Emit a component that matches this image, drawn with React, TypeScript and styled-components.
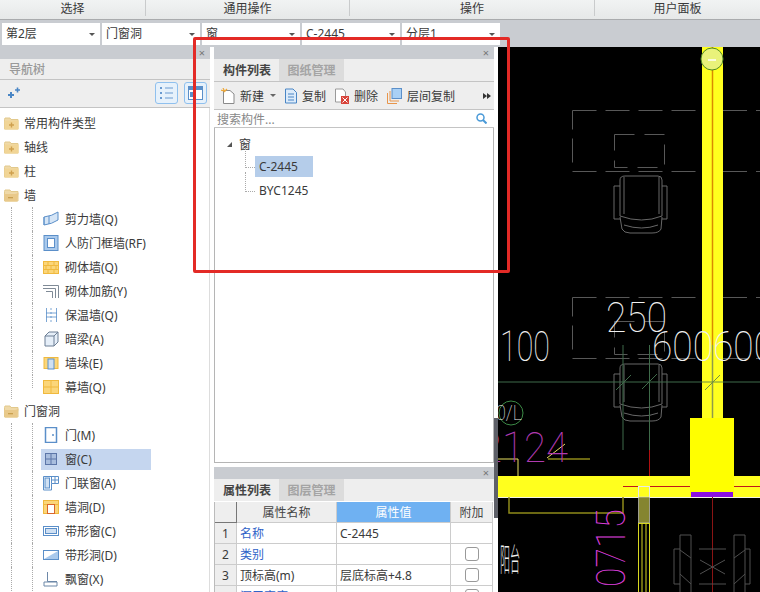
import React from 'react'
import styled, { createGlobalStyle } from 'styled-components'

const Global = createGlobalStyle`
  html, body { margin: 0; padding: 0; background: #fff; overflow: hidden; }
  * { box-sizing: border-box; }
`

const FONT = `"Noto Sans", "Noto Sans CJK SC", sans-serif`

const Page = styled.div`
  position: relative;
  width: 760px;
  height: 592px;
  overflow: hidden;
  display: flex;
  flex-direction: column;
  font-family: ${FONT};
  font-size: 12px;
  color: #3a3a3a;
`

const MenuBar = styled.div`
  flex: none;
  height: 20px;
  display: flex;
  background: linear-gradient(#f1f3f3, #e6e8e8);
  border-bottom: 1px solid #a9abad;
`

const MenuGroup = styled.div<{ $w: number }>`
  width: ${(p) => p.$w}px;
  line-height: 17px;
  text-align: center;
  border-right: 1px solid #c9cbcc;
  height: 16px;
  &:last-child { border-right: 0; }
`

const ComboBar = styled.div`
  flex: none;
  height: 27px;
  padding: 3px 0 0 2px;
  display: flex;
  gap: 2px;
  background: #c9ccd1;
`

const Combo = styled.div`
  width: 98px;
  height: 22px;
  background: #fff;
  padding-left: 4px;
  line-height: 21px;
  position: relative;
  &::after {
    content: '';
    position: absolute;
    right: 5px;
    top: 10px;
    border: 3px solid transparent;
    border-top: 3px solid #555;
  }
`

const Main = styled.div`
  flex: 1;
  display: flex;
  min-height: 0;
`

const Panel = styled.div<{ $w: number }>`
  width: ${(p) => p.$w}px;
  flex: none;
  display: flex;
  flex-direction: column;
`

const Gutter = styled.div<{ $w: number }>`
  width: ${(p) => p.$w}px;
  flex: none;
  background: #fff;
`

const Splitter = styled.div`
  width: 4px;
  flex: none;
  padding-top: 371px;
  background: #fff;
`

const SplitterGrip = styled.div`
  height: 100px;
  background: #5e6068;
`

const Stack = styled.div`
  width: 280px;
  flex: none;
  display: flex;
  flex-direction: column;
`

const TitleStrip = styled.div`
  flex: none;
  height: 12px;
  background: #c9ccd1;
  color: #777;
  text-align: right;
  font-size: 11px;
  line-height: 12px;
  padding-right: 5px;
`

const NavHead = styled.div`
  flex: none;
  height: 21px;
  background: #eeeeee;
  border-bottom: 1px solid #c4c4c4;
  color: #999;
  line-height: 22px;
  padding-left: 9px;
  font-weight: 500;
`

const NavTools = styled.div`
  flex: none;
  height: 28px;
  background: #eeeeee;
  border-bottom: 1px solid #c4c4c4;
  display: flex;
  align-items: center;
  padding: 0 3px 1px 8px;
  gap: 6px;
`

const ToggleButton = styled.div`
  width: 23px;
  height: 22px;
  border: 1px solid #8fc0ee;
  border-radius: 3px;
  background: #e6f1fb;
  display: flex;
  align-items: center;
  justify-content: center;
`

const Spacer = styled.div`
  flex: 1;
`

const Tree = styled.div`
  flex: 1;
  background: #fff;
  padding-top: 3px;
  overflow: hidden;
  border-right: 1px solid #ddd;
`

const RootRow = styled.div`
  height: 24px;
  display: flex;
  align-items: center;
  padding-left: 4px;
  gap: 5px;
`

const ChildRow = styled.div<{ $last?: boolean; $on?: boolean }>`
  height: 24px;
  display: flex;
  align-items: center;
  padding-left: 43px;
  gap: 5px;
  position: relative;
  &::before {
    content: '';
    position: absolute;
    left: 11px;
    top: 0;
    bottom: 0;
    border-left: 1px dotted #aaa;
  }
  &::after {
    content: '';
    position: absolute;
    left: 32px;
    top: 0;
    width: 9px;
    height: ${(p) => (p.$last ? 13 : 24)}px;
    border-left: 1px dotted #aaa;
    background: radial-gradient(circle, #aaa 0.5px, transparent 0.6px) 0 11px / 2px 2px repeat-x;
  }
`

const RowLabel = styled.span<{ $on?: boolean }>`
  display: flex;
  align-items: center;
  height: 21px;
  flex: none;
  gap: 6px;
  margin-left: -2px;
  padding-left: 2px;
  width: 110px;
  white-space: nowrap;
  background: ${(p) => (p.$on ? '#c5d6ef' : 'transparent')};
`

const TabRow = styled.div`
  flex: none;
  height: 22px;
  display: flex;
  background: #eeeeee;
  padding-left: 1px;
`

const Tab = styled.div<{ $active?: boolean }>`
  width: ${(p) => (p.$active ? 64 : 65)}px;
  text-align: center;
  line-height: 24px;
  font-weight: 700;
  color: ${(p) => (p.$active ? '#444' : '#a4a4a4')};
  background: ${(p) => (p.$active ? '#eeeeee' : '#dcdcdc')};
`

const ListTools = styled.div`
  flex: none;
  height: 29px;
  background: #eeeeee;
  border-top: 1px solid #c4c4c4;
  border-bottom: 1px solid #c4c4c4;
  display: flex;
  align-items: center;
  padding-left: 7px;
`

const ToolButton = styled.div<{ $w: number }>`
  width: ${(p) => p.$w}px;
  flex: none;
  display: flex;
  align-items: center;
  gap: 5px;
  white-space: nowrap;
`

const DropCaret = styled.span`
  border: 3px solid transparent;
  border-top: 3px solid #666;
  margin: 3px 0 0 1px;
`

const MoreArrows = styled.svg`
  margin-left: auto;
  margin-right: 3px;
`

const SearchBox = styled.div`
  flex: none;
  height: 18px;
  display: flex;
  align-items: center;
  justify-content: space-between;
  padding: 0 7px 0 3px;
  color: #888;
  background: #fff;
  border-bottom: 1px solid #c4c4c4;
`

const ListTree = styled.div`
  height: 335px;
  flex: none;
  background: #fff;
  border-left: 1px solid #b5b5b5;
  border-right: 1px solid #b5b5b5;
  border-bottom: 1px solid #b5b5b5;
  padding: 6px 0 0 10px;
`

const GroupRow = styled.div`
  height: 20px;
  display: flex;
  align-items: center;
  gap: 7px;
  padding-left: 2px;
`

const Triangle = styled.span`
  width: 0;
  height: 0;
  border-left: 5px solid transparent;
  border-bottom: 5px solid #555;
`

const LeafRow = styled.div`
  position: relative;
  height: 24px;
  display: flex;
  align-items: center;
  padding-left: 30px;
  &::before {
    content: '';
    position: absolute;
    left: 20px;
    top: -6px;
    height: 19px;
    width: 9px;
    border-left: 1px dotted #aaa;
    border-bottom: 1px dotted #aaa;
  }
`

const LeafName = styled.span<{ $on?: boolean }>`
  height: 21px;
  line-height: 21px;
  padding: 0 4px;
  width: 58px;
  white-space: nowrap;
  background: ${(p) => (p.$on ? '#b5cdea' : 'transparent')};
`

const Gap = styled.div`
  flex: none;
  height: 4px;
  background: #fff;
`

const Props = styled.div`
  flex: 1;
  display: flex;
  flex-direction: column;
  background: #fff;
  min-height: 0;
`

const Grid = styled.div`
  display: grid;
  grid-template-columns: 22px 100px 114px 42px;
  grid-auto-rows: 21px;
  border-left: 1px solid #bbb;
  margin-top: 1px;
  width: 279px;
`

const HeadCell = styled.div<{ $sel?: boolean; $corner?: boolean }>`
  text-align: center;
  line-height: 22px;
  background: ${(p) => (p.$sel ? '#6fb1f2' : '#eeeeee')};
  color: ${(p) => (p.$sel ? '#fff' : '#444')};
  border-right: 1px solid ${(p) => (p.$corner ? '#777' : '#ccc')};
  border-bottom: 1px solid ${(p) => (p.$corner ? '#777' : '#ccc')};
`

const NumCell = styled.div`
  text-align: center;
  line-height: 21px;
  background: #eeeeee;
  border-right: 1px solid #ccc;
  border-bottom: 1px solid #ccc;
`

const Cell = styled.div<{ $blue?: boolean }>`
  line-height: 21px;
  padding-left: 3px;
  color: ${(p) => (p.$blue ? '#2f62c8' : '#3a3a3a')};
  border-right: 1px solid #ccc;
  border-bottom: 1px solid #ccc;
  white-space: nowrap;
`

const CheckCell = styled.div`
  display: flex;
  align-items: center;
  justify-content: center;
  border-right: 1px solid #ccc;
  border-bottom: 1px solid #ccc;
`

const Check = styled.span`
  width: 14px;
  height: 14px;
  border: 1px solid #999;
  border-radius: 3px;
  background: #fff;
`

const Canvas = styled.svg`
  flex: 1;
  display: block;
  background: #000;
`

const RedFrame = styled.div`
  position: absolute;
  left: 193px;
  top: 37px;
  width: 317px;
  height: 236px;
  border: 3px solid #e32a26;
  border-radius: 2px;
  pointer-events: none;
`

const Folder = ({ open }: { open?: boolean }) => (
  <svg width="15" height="13" viewBox="0 0 15 13">
    <path d="M0.5 2.5 L1 1 H6 L7 2.5 H14 V12 H0.5Z" fill="#efd9a8" stroke="#e2c98c" />
    {open ? (
      <path d="M0 5 H11 L14.5 4 L13 12.5 H1Z" fill="#e9c98a" />
    ) : (
      <rect x="0.5" y="3.5" width="14" height="9" fill="#f1d596" />
    )}
    {open ? (
      <rect x="4" y="8" width="5" height="1.3" fill="#c9a050" />
    ) : (
      <path d="M5 8 H10 M7.5 5.5 V10.5" stroke="#cfa04e" strokeWidth="1.4" />
    )}
  </svg>
)

const BLUE = '#5b8fc9'
const GOLD = '#f0b93e'

const NodeIcon = ({ kind }: { kind: string }) => {
  let inner: React.ReactNode = null
  switch (kind) {
    case 'shear':
      inner = (
        <>
          <path d="M1 6 Q9 5 15 1 V9 Q9 13 1 14Z" fill="#d5e5f6" stroke={BLUE} />
          <path d="M1 6 V14 M6 5 V13" stroke={BLUE} />
        </>
      )
      break
    case 'frame':
      inner = (
        <>
          <rect x="1" y="0.5" width="14" height="15" fill="#a9c9ec" stroke={BLUE} />
          <rect x="4.5" y="3.5" width="7" height="9" fill="#fff" stroke={BLUE} />
        </>
      )
      break
    case 'brick':
      inner = (
        <>
          <rect x="0.5" y="2.5" width="15" height="12" fill="#fbd67a" stroke={GOLD} />
          <path d="M1 6.5 H15 M1 10.5 H15 M5 3 V6 M11 3 V6 M8 7 V10 M3 7 V10 M13 7 V10 M5 11 V14 M11 11 V14" stroke={GOLD} />
        </>
      )
      break
    case 'rebar':
      inner = <path d="M0 2.5 H15.5 V15 M0 5.5 H12.5 V15 M3 8.5 H9.5 V15" fill="none" stroke="#7f8a96" />
      break
    case 'insul':
      inner = <path d="M3.5 1 V15 M13.5 1 V15 M8 1 V3 M8 5 V7 M8 9 V11 M8 13 V15 M3 6 H14 M3 10 H14" fill="none" stroke={BLUE} strokeWidth="0.8" />
      break
    case 'beam':
      inner = (
        <>
          <path d="M2 5 L6 1 H15 V11 L11 15 H2Z" fill="#e6eff9" stroke="#6d7f95" />
          <path d="M2 5 H11 V15 M11 5 L15 1" fill="none" stroke="#6d7f95" />
        </>
      )
      break
    case 'pier':
      inner = (
        <>
          <rect x="1" y="2.5" width="14" height="11" fill="#fbd67a" stroke={GOLD} />
          <rect x="5" y="4" width="6" height="10" fill="#cfe0f3" stroke={BLUE} />
        </>
      )
      break
    case 'curtain':
      inner = (
        <>
          <rect x="0.5" y="1.5" width="15" height="13" fill="#fbd67a" stroke={GOLD} />
          <path d="M8 2 V14 M1 8 H15" stroke={GOLD} />
        </>
      )
      break
    case 'door':
      inner = (
        <>
          <rect x="2.5" y="0.5" width="11" height="15" fill="#fff" stroke={BLUE} strokeWidth="1.5" />
          <circle cx="10" cy="8" r="1" fill={BLUE} />
        </>
      )
      break
    case 'window':
      inner = (
        <>
          <rect x="2.5" y="2.5" width="11" height="11" fill="#a9bede" stroke="#5c76a8" />
          <path d="M8 3 V13 M3 8 H13" stroke="#5c76a8" />
        </>
      )
      break
    case 'doorwin':
      inner = (
        <>
          <path d="M0.5 1.5 H15.5 V8.5 H8.5 V15 H0.5Z" fill="#fff" stroke={BLUE} />
          <path d="M8.5 1.5 V8.5 M12 2 V8 M9 5 H15" stroke={BLUE} />
          <rect x="2" y="3" width="4.5" height="10" fill="#cfe0f3" stroke={BLUE} />
        </>
      )
      break
    case 'hole':
      inner = (
        <>
          <rect x="0.5" y="1.5" width="15" height="13" fill="#fbd67a" stroke={GOLD} />
          <path d="M1 5.5 H15" stroke={GOLD} />
          <rect x="4.5" y="5.5" width="7" height="9" fill="#fff" stroke="#d9652c" />
        </>
      )
      break
    case 'strip':
      inner = (
        <>
          <rect x="0.5" y="3.5" width="15" height="9" fill="#fff" stroke={BLUE} />
          <rect x="2.5" y="5.5" width="11" height="5" fill="#cfe0f3" stroke={BLUE} />
        </>
      )
      break
    case 'striphole':
      inner = (
        <>
          <rect x="0.5" y="3.5" width="15" height="9" fill="#fff" stroke={BLUE} />
          <path d="M1 12 L15 4 V12Z" fill="#a9c9ec" />
        </>
      )
      break
    default:
      inner = <path d="M4.5 1 V10.5 H14 M1 11 H14 V15 H1Z" fill="none" stroke="#6d88a8" />
  }
  return (
    <svg width="16" height="16" viewBox="0 0 16 16">
      {inner}
    </svg>
  )
}

const wallItems: [string, string][] = [
  ['shear', '剪力墙(Q)'],
  ['frame', '人防门框墙(RF)'],
  ['brick', '砌体墙(Q)'],
  ['rebar', '砌体加筋(Y)'],
  ['insul', '保温墙(Q)'],
  ['beam', '暗梁(A)'],
  ['pier', '墙垛(E)'],
  ['curtain', '幕墙(Q)'],
]

const openingItems: [string, string][] = [
  ['door', '门(M)'],
  ['window', '窗(C)'],
  ['doorwin', '门联窗(A)'],
  ['hole', '墙洞(D)'],
  ['strip', '带形窗(C)'],
  ['striphole', '带形洞(D)'],
  ['bay', '飘窗(X)'],
]

const Chair = ({ y }: { y: number }) => (
  <g transform={`translate(0 ${y})`} fill="none" stroke="#686868" strokeWidth="1">
    <path d="M620 180 Q620 176 625 176 H658 Q662 176 662 180 V216 Q642 224 620 216Z" />
    <path d="M624 177 V214 M659 177 V214" />
    <path d="M614 186 H620 M614 186 V219 H620 M662 186 H667 V219 H662" />
    <path d="M620 217 L622 229 Q624 233 630 233 H652 Q659 233 661 229 L662 217" />
    <path d="M624 225 Q642 231 658 225" />
  </g>
)

const DashedRoom = ({ y }: { y: number }) => (
  <g fill="none" stroke="#585858" strokeWidth="1" strokeDasharray="24 9">
    <rect x="572.5" y={y + 0.5} width="130" height="61" />
    <path d={`M723 ${y + 0.5} H760 M723 ${y + 61.5} H760`} />
    <rect x="614.5" y={y + 24.5} width="50" height="33" strokeDasharray="20 10" />
  </g>
)

const CadDrawing = () => (
  <Canvas viewBox="498 47 262 545" preserveAspectRatio="none">
    <DashedRoom y={110} />
    <DashedRoom y={297} />
    <Chair y={0} />
    <Chair y={188} />

    {/* grid lines */}
    <path d="M498 382 H702 M723 382 H760" stroke="#3f6b4a" />
    <path d="M623 345 V450 M649.5 345 V450" stroke="#3f6b4a" />
    <path d="M616 390 L631 375 M642 389 L657 374" stroke="#3f6b4a" />

    {/* vertical wall */}
    <rect x="702" y="47" width="21" height="372" fill="#ffff1e" />
    <path d="M712.5 47 V345" stroke="#d98a00" strokeWidth="1.5" />
    <path d="M712.5 345 V418" stroke="#8e9a4a" strokeWidth="1.5" />
    <path d="M705 390 L720 375 M702 382 H723" stroke="#6f9040" />
    <circle cx="712" cy="59" r="11" fill="#e9f27a" stroke="#4f8a22" />
    <path d="M708 60 H716" stroke="#fff" strokeWidth="1.5" />

    {/* horizontal wall */}
    <rect x="498" y="476" width="262" height="21" fill="#ffff1e" />
    <path d="M498 497.5 H760" stroke="#f4f4e0" />
    <rect x="690" y="418" width="44" height="79" fill="#ffff00" />
    <rect x="691" y="492" width="42" height="5" fill="#8a10e0" />
    <path d="M623 486.5 H690 M734 486.5 H760" stroke="#c01818" />
    <path d="M649.5 450 V476" stroke="#b01010" />
    <path d="M712.5 497 V592" stroke="#8a1414" />

    {/* annotation leaders */}
    <path d="M498 459 H518 V476" fill="none" stroke="#e8e060" />
    <path d="M548 459 H590" stroke="#8f8a1a" strokeWidth="1.5" />
    <path d="M547 458 L565 444" stroke="#e8e060" />
    <path d="M509 497 V513 H623 V497" fill="none" stroke="#8f8a1a" strokeWidth="1.5" />

    {/* stub below the wall */}
    <rect x="638.5" y="486.5" width="11" height="11" fill="#ffff1e" stroke="#e8e8e8" />
    <rect x="638.5" y="497" width="11" height="26" fill="#858530" stroke="#ddd" strokeWidth="0.6" />
    <rect x="638" y="524" width="12" height="68" fill="#000" />
    <path d="M638.5 524 V592 M642 524 V592 M646 524 V592 M649.5 524 V592" stroke="#d8d820" />
    <path d="M638 523.5 H650" stroke="#d8d820" />

    {/* bottom right fixture */}
    <g fill="none" stroke="#505050">
      <path d="M680 592 V535 H691 V592 M734 592 V535 H745 V592" />
      <path d="M674 549 H680 M674 549 V584 H680 M745 549 H750 V584 H745" />
      <path d="M680 550 L691 558 M745 550 L734 558 M680 574 L691 584 M745 574 L734 584" />
      <path d="M699 549 H726 M699 584 H726 M700 560 L725 574 M725 560 L700 574" />
    </g>

    <circle cx="511" cy="413" r="12" fill="none" stroke="#3c8a46" />

    <g fontFamily="Roboto, Lato, sans-serif" fontWeight="100" fill="#f0f0f0">
      <text x="606" y="332" fontSize="42" textLength="61" lengthAdjust="spacingAndGlyphs">250</text>
      <text x="500" y="361" fontSize="42" textLength="50" lengthAdjust="spacingAndGlyphs">100</text>
      <text x="652" y="361" fontSize="42" textLength="122" lengthAdjust="spacingAndGlyphs">600600</text>
      <text x="496" y="420" fontSize="20" textLength="26" lengthAdjust="spacingAndGlyphs">0/L</text>
    </g>
    <text x="480" y="462" fontFamily="Roboto, Lato, sans-serif" fontWeight="100" fontSize="42" fill="#b03ab0" textLength="88" lengthAdjust="spacingAndGlyphs">2124</text>
    <text transform="translate(625 587) rotate(-90)" fontFamily="Roboto, Lato, sans-serif" fontWeight="100" fontSize="40" fill="#e040e0" textLength="78" lengthAdjust="spacingAndGlyphs">0715</text>
    <text transform="translate(500 571) scale(0.5 1.6)" fontFamily="Noto Sans CJK SC, sans-serif" fontWeight="300" fontSize="20" fill="#eee">阳台</text>
  </Canvas>
)

const App = () => {
  return (
    <Page>
      <Global />
      <MenuBar>
        <MenuGroup $w={146}>选择</MenuGroup>
        <MenuGroup $w={204}>通用操作</MenuGroup>
        <MenuGroup $w={245}>操作</MenuGroup>
        <MenuGroup $w={165}>用户面板</MenuGroup>
      </MenuBar>
      <ComboBar>
        <Combo>第2层</Combo>
        <Combo>门窗洞</Combo>
        <Combo>窗</Combo>
        <Combo>C-2445</Combo>
        <Combo>分层1</Combo>
      </ComboBar>
      <Main>
        <Panel $w={210}>
          <TitleStrip>×</TitleStrip>
          <NavHead>导航树</NavHead>
          <NavTools>
            <svg width="12" height="12" viewBox="0 0 12 12">
              <path d="M0 8 H6 M3 5 V11" stroke="#4a86c5" strokeWidth="2" />
              <path d="M7 3 H12 M9.5 0.5 V5.5" stroke="#4a86c5" strokeWidth="1.6" />
            </svg>
            <Spacer />
            <ToggleButton>
              <svg width="15" height="14" viewBox="0 0 15 14">
                <path d="M1 2 H3 M1 7 H3 M1 12 H3" stroke="#6a9ad0" strokeWidth="2" />
                <path d="M6 2 H14 M6 7 H14 M6 12 H14" stroke="#6a9ad0" />
              </svg>
            </ToggleButton>
            <ToggleButton>
              <svg width="15" height="14" viewBox="0 0 15 14">
                <rect x="0.5" y="0.5" width="14" height="13" fill="#fff" stroke="#5b8fc9" />
                <rect x="1" y="1" width="13" height="3" fill="#5b8fc9" />
                <rect x="2" y="6" width="4" height="5" fill="#5b8fc9" />
              </svg>
            </ToggleButton>
          </NavTools>
          <Tree>
            <RootRow>
              <Folder />
              常用构件类型
            </RootRow>
            <RootRow>
              <Folder />
              轴线
            </RootRow>
            <RootRow>
              <Folder />柱
            </RootRow>
            <RootRow>
              <Folder open />墙
            </RootRow>
            {wallItems.map(([kind, label], i) => (
              <ChildRow key={label} $last={i === wallItems.length - 1}>
                <RowLabel>
                  <NodeIcon kind={kind} />
                  {label}
                </RowLabel>
              </ChildRow>
            ))}
            <RootRow>
              <Folder open />
              门窗洞
            </RootRow>
            {openingItems.map(([kind, label]) => (
              <ChildRow key={label}>
                <RowLabel $on={kind === 'window'}>
                  <NodeIcon kind={kind} />
                  {label}
                </RowLabel>
              </ChildRow>
            ))}
          </Tree>
        </Panel>
        <Gutter $w={4} />
        <Stack>
          <TitleStrip>×</TitleStrip>
          <TabRow>
            <Tab $active>构件列表</Tab>
            <Tab>图纸管理</Tab>
          </TabRow>
          <ListTools>
            <ToolButton $w={64}>
              <svg width="14" height="16" viewBox="0 0 14 16">
                <path d="M2.5 2.5 H9 L13 6 V15.5 H2.5Z" fill="#fff" stroke="#8a8a8a" />
                <path d="M0 2 L3 3 M2 0 L4 4 M6 1 L3 4" stroke="#eda83a" strokeWidth="1.2" />
              </svg>
              新建
              <DropCaret />
            </ToolButton>
            <ToolButton $w={50}>
              <svg width="12" height="16" viewBox="0 0 12 16">
                <path d="M0.5 1 H8 L11.5 4.5 V15 H0.5Z" fill="#dcebfa" stroke="#4a86c5" />
                <path d="M3 6 H9 M3 9 H9 M3 12 H9" stroke="#4a86c5" />
              </svg>
              复制
            </ToolButton>
            <ToolButton $w={52}>
              <svg width="14" height="16" viewBox="0 0 14 16">
                <path d="M0.5 1 H8 L10.5 4 V14 H0.5Z" fill="#fff" stroke="#9a9a9a" />
                <rect x="6" y="8" width="8" height="8" fill="#d8433a" />
                <path d="M7.5 9.5 L12.5 14.5 M12.5 9.5 L7.5 14.5" stroke="#fff" />
              </svg>
              删除
            </ToolButton>
            <ToolButton $w={90}>
              <svg width="15" height="16" viewBox="0 0 15 16">
                <path d="M0.5 5 V15.5 H10" fill="none" stroke="#e8954a" />
                <path d="M3 3 V13 H12" fill="none" stroke="#e8954a" />
                <rect x="5" y="0.5" width="9.5" height="10" fill="#a9d0f5" stroke="#5b8fc9" />
              </svg>
              层间复制
            </ToolButton>
            <MoreArrows width="8" height="6" viewBox="0 0 8 6">
              <path d="M0 0 L4 3 L0 6Z M4 0 L8 3 L4 6Z" fill="#333" />
            </MoreArrows>
          </ListTools>
          <SearchBox>
            搜索构件...
            <svg width="11" height="11" viewBox="0 0 11 11">
              <circle cx="4.5" cy="4.5" r="3.5" fill="none" stroke="#4a9ad8" strokeWidth="1.5" />
              <path d="M7 7 L10.5 10.5" stroke="#4a9ad8" strokeWidth="2" />
            </svg>
          </SearchBox>
          <ListTree>
            <GroupRow>
              <Triangle />窗
            </GroupRow>
            <LeafRow>
              <LeafName $on>C-2445</LeafName>
            </LeafRow>
            <LeafRow>
              <LeafName>BYC1245</LeafName>
            </LeafRow>
          </ListTree>
          <Gap />
          <Props>
            <TitleStrip>×</TitleStrip>
            <TabRow>
              <Tab $active>属性列表</Tab>
              <Tab>图层管理</Tab>
            </TabRow>
            <Grid>
              <HeadCell $corner />
              <HeadCell>属性名称</HeadCell>
              <HeadCell $sel>属性值</HeadCell>
              <HeadCell>附加</HeadCell>
              <NumCell>1</NumCell>
              <Cell $blue>名称</Cell>
              <Cell>C-2445</Cell>
              <Cell />
              <NumCell>2</NumCell>
              <Cell $blue>类别</Cell>
              <Cell />
              <CheckCell>
                <Check />
              </CheckCell>
              <NumCell>3</NumCell>
              <Cell>顶标高(m)</Cell>
              <Cell>层底标高+4.8</Cell>
              <CheckCell>
                <Check />
              </CheckCell>
              <NumCell>4</NumCell>
              <Cell $blue>洞口宽度</Cell>
              <Cell />
              <CheckCell>
                <Check />
              </CheckCell>
            </Grid>
          </Props>
        </Stack>
        <Splitter>
          <SplitterGrip />
        </Splitter>
        <CadDrawing />
      </Main>
      <RedFrame />
    </Page>
  )
}

export default App
